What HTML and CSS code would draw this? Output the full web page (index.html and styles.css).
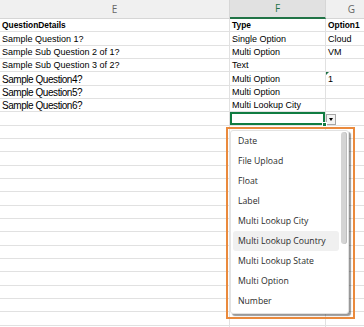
FILE: index.html
```html
<!DOCTYPE html>
<html lang="en">
<head>
    <meta charset="UTF-8">
    <meta name="viewport" content="width=device-width, initial-scale=1.0">
    <title>Questions Sheet</title>
    <link rel="stylesheet" href="styles.css">
</head>
<body>
    <div class="sheet">
        <!-- Column headers -->
        <div class="row head">
            <div class="cell colhead">E</div>
            <div class="cell colhead active">F</div>
            <div class="cell colhead">G</div>
        </div>

        <!-- Data rows -->
        <div class="row">
            <div class="cell bold">QuestionDetails</div>
            <div class="cell bold">Type</div>
            <div class="cell bold">Option1</div>
        </div>
        <div class="row">
            <div class="cell">Sample Question 1?</div>
            <div class="cell">Single Option</div>
            <div class="cell">Cloud</div>
        </div>
        <div class="row">
            <div class="cell">Sample Sub Question 2 of 1?</div>
            <div class="cell">Multi Option</div>
            <div class="cell">VM</div>
        </div>
        <div class="row">
            <div class="cell">Sample Sub Question 3 of 2?</div>
            <div class="cell">Text</div>
            <div class="cell"></div>
        </div>
        <div class="row">
            <div class="cell big">Sample Question4?</div>
            <div class="cell">Multi Option</div>
            <div class="cell flagged">1</div>
        </div>
        <div class="row">
            <div class="cell big">Sample Question5?</div>
            <div class="cell">Multi Option</div>
            <div class="cell"></div>
        </div>
        <div class="row">
            <div class="cell big">Sample Question6?</div>
            <div class="cell">Multi Lookup City</div>
            <div class="cell"></div>
        </div>
        <div class="row">
            <div class="cell"></div>
            <div class="cell sel"><span class="drop-btn"></span></div>
            <div class="cell"></div>
        </div>
        <div id="empty-rows"></div>

        <!-- Validation list -->
        <div class="popup">
            <div class="panel">
                <ul class="options">
                    <li>Date</li>
                    <li>File Upload</li>
                    <li>Float</li>
                    <li>Label</li>
                    <li>Multi Lookup City</li>
                    <li class="hover">Multi Lookup Country</li>
                    <li>Multi Lookup State</li>
                    <li>Multi Option</li>
                    <li>Number</li>
                </ul>
                <div class="scroll"><div class="thumb"></div></div>
            </div>
        </div>
    </div>
    <script>
      const empty = document.getElementById('empty-rows');
      for (let i = 0; i < 16; i++) {
          const row = document.createElement('div');
          row.className = 'row';
          row.innerHTML = '<div class="cell"></div><div class="cell"></div><div class="cell"></div>';
          empty.appendChild(row);
      }
  </script>
</body>
</html>
```

FILE: styles.css
```css
/* General */
body {
    margin: 0;
    font-family: "Liberation Sans", Arial, sans-serif;
    background-color: white;
    color: black;
    overflow: hidden;
}

.sheet {
    position: relative;
    width: 378px;
}

/* Grid */
.row {
    display: grid;
    grid-template-columns: 230px 96px 52px;
    height: 13.333px;
}

.cell {
    box-sizing: border-box;
    border-right: 1px solid #e1e1e1;
    border-bottom: 1px solid #e1e1e1;
    padding: 0 2px;
    font-size: 9px;
    line-height: 11px;
    white-space: nowrap;
    overflow: hidden;
    display: flex;
    align-items: flex-end;
}

.cell.bold {
    font-weight: bold;
    font-size: 8.4px;
}

.cell.big {
    font-size: 10px;
    letter-spacing: -0.45px;
}

/* Column headers */
.row.head {
    height: 19px;
    background-color: #f0f0f0;
}

.colhead {
    font-family: "Open Sans", sans-serif;
    font-size: 10px;
    color: #666;
    justify-content: center;
    align-items: center;
    border-color: #d6d6d6;
}

.colhead.active {
    background-color: #e1e1e1;
    color: #217346;
    border-bottom: 2px solid #217346;
}

/* Comment / error marker */
.cell.flagged {
    position: relative;
}

.cell.flagged::before {
    content: "";
    position: absolute;
    left: 0;
    top: 0;
    border-top: 3px solid #1e7145;
    border-right: 3px solid transparent;
}

/* Selected cell */
.cell.sel {
    position: relative;
    overflow: visible;
}

.cell.sel::before {
    content: "";
    position: absolute;
    inset: 0;
    border: 2px solid #107c41;
}

.cell.sel::after {
    content: "";
    position: absolute;
    right: -2px;
    bottom: -2px;
    width: 3px;
    height: 3px;
    background-color: #107c41;
    border: 1px solid white;
}

.drop-btn {
    position: absolute;
    left: calc(100% + 1px);
    top: 1.7px;
    width: 10px;
    height: 11px;
    box-sizing: border-box;
    border: 1px solid #a6a6a6;
    background-color: #f4f4f4;
    display: flex;
    align-items: center;
    justify-content: center;
}

.drop-btn::after {
    content: "";
    border-left: 2.5px solid transparent;
    border-right: 2.5px solid transparent;
    border-top: 3px solid black;
}

/* Dropdown list */
.popup {
    position: absolute;
    left: 226px;
    top: 127px;
    width: 129px;
    height: 192px;
    box-sizing: border-box;
    border: 2px solid #ea8a3d;
    padding: 1px 0 0 2px;
}

.panel {
    box-sizing: border-box;
    width: 119px;
    height: 184px;
    border: 1px solid #e2e2e2;
    border-radius: 3px;
    background-color: white;
    box-shadow: 2px 2px 1px rgba(0, 0, 0, 0.4);
    display: flex;
    gap: 2px;
    padding-left: 2px;
    overflow: hidden;
}

.options {
    list-style: none;
    margin: 0;
    padding: 0;
    width: 106px;
}

.options li {
    height: 20px;
    line-height: 20px;
    padding-left: 5px;
    border-radius: 3px;
    font-family: "Open Sans", sans-serif;
    font-size: 8.7px;
    color: #2b2b2b;
    white-space: nowrap;
}

.options li.hover {
    background-color: #f0f0f0;
}

.scroll {
    width: 6px;
    padding-top: 1px;
}

.thumb {
    height: 112px;
    border-radius: 3px;
    background-color: #d4d4d4;
    box-shadow: inset -1px 0 0 #bdbdbd;
}
```
